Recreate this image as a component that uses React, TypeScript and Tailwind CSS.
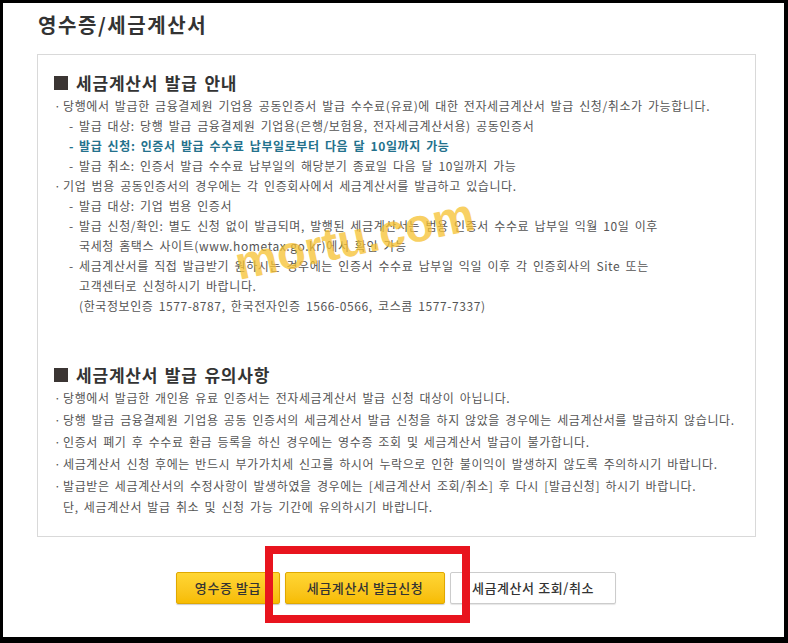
import React from "react";

const font = { fontFamily: '"Noto Sans CJK KR", "Noto Sans", sans-serif' };

function Bullet({ children }: { children: React.ReactNode }) {
  return (
    <div className="flex h-[20px] items-center pl-[16px]">
      <span className="w-[9px] shrink-0">·</span>
      <span>{children}</span>
    </div>
  );
}

function Dash({ children, cls = "" }: { children: React.ReactNode; cls?: string }) {
  return (
    <div className={"flex h-[20px] items-center pl-[31px] " + cls}>
      <span className="w-[10px] shrink-0">-</span>
      <span>{children}</span>
    </div>
  );
}

function Cont({ children, pl = "pl-[41px]" }: { children: React.ReactNode; pl?: string }) {
  return <div className={"flex h-[20px] items-center " + pl}>{children}</div>;
}

export default function App() {
  return (
    <div className="w-[788px] h-[643px] bg-black pl-[3px] pt-[3px] pr-[4px] pb-[6px]" style={font}>
      <div className="relative h-full w-full bg-white overflow-hidden">
        <div className="pl-[35px] pt-[9px] text-[20px] font-bold text-[#333] leading-[26px] tracking-[1.6px]">
          영수증/세금계산서
        </div>
        <div className="ml-[34px] mr-[28px] mt-[16px] h-[483px] border border-[#d9d9d9] text-[12px] text-[#555] tracking-[0.6px] [word-spacing:2px]">
          <div className="pl-[16px] pt-[23px] flex items-center h-[32px] text-[17px] font-bold text-[#333] tracking-[0.8px]">
            <span className="w-[14px] h-[14px] bg-[#3b3533] mr-[8px]"></span>
            세금계산서 발급 안내
          </div>
          <div className="mt-[9px] leading-[20px]">
            <Bullet>당행에서 발급한 금융결제원 기업용 공동인증서 발급 수수료(유료)에 대한 전자세금계산서 발급 신청/취소가 가능합니다.</Bullet>
            <Dash>발급 대상: 당행 발급 금융결제원 기업용(은행/보험용, 전자세금계산서용) 공동인증서</Dash>
            <Dash cls="font-bold text-[#23718c]">발급 신청: 인증서 발급 수수료 납부일로부터 다음 달 10일까지 가능</Dash>
            <Dash>발급 취소: 인증서 발급 수수료 납부일의 해당분기 종료일 다음 달 10일까지 가능</Dash>
            <Bullet>기업 범용 공동인증서의 경우에는 각 인증회사에서 세금계산서를 발급하고 있습니다.</Bullet>
            <Dash>발급 대상: 기업 범용 인증서</Dash>
            <Dash>발급 신청/확인: 별도 신청 없이 발급되며, 발행된 세금계산서는 범용 인증서 수수료 납부일 익월 10일 이후</Dash>
            <Cont>국세청 홈택스 사이트(www.hometax.go.kr)에서 확인 가능</Cont>
            <Dash>세금계산서를 직접 발급받기 원하시는 경우에는 인증서 수수료 납부일 익일 이후 각 인증회사의 Site 또는</Dash>
            <Cont>고객센터로 신청하시기 바랍니다.</Cont>
            <Cont>(한국정보인증 1577-8787, 한국전자인증 1566-0566, 코스콤 1577-7337)</Cont>
          </div>
          <div className="mt-[47px] pl-[16px] flex items-center h-[24px] text-[17px] font-bold text-[#333] tracking-[0.8px]">
            <span className="w-[14px] h-[14px] bg-[#3b3533] mr-[8px]"></span>
            세금계산서 발급 유의사항
          </div>
          <div className="flex flex-col">
            <div className="h-[22px] flex items-center"><Bullet>당행에서 발급한 개인용 유료 인증서는 전자세금계산서 발급 신청 대상이 아닙니다.</Bullet></div>
            <div className="h-[22px] flex items-center"><Bullet>당행 발급 금융결제원 기업용 공동 인증서의 세금계산서 발급 신청을 하지 않았을 경우에는 세금계산서를 발급하지 않습니다.</Bullet></div>
            <div className="h-[22px] flex items-center"><Bullet>인증서 폐기 후 수수료 환급 등록을 하신 경우에는 영수증 조회 및 세금계산서 발급이 불가합니다.</Bullet></div>
            <div className="h-[22px] flex items-center"><Bullet>세금계산서 신청 후에는 반드시 부가가치세 신고를 하시어 누락으로 인한 불이익이 발생하지 않도록 주의하시기 바랍니다.</Bullet></div>
            <div className="h-[22px] flex items-center"><Bullet>발급받은 세금계산서의 수정사항이 발생하였을 경우에는 [세금계산서 조회/취소] 후 다시 [발급신청] 하시기 바랍니다.</Bullet></div>
            <Cont pl="pl-[25px]">단, 세금계산서 발급 취소 및 신청 가능 기간에 유의하시기 바랍니다.</Cont>
          </div>
        </div>
        <div className="mt-[35px] flex gap-[5px] pl-[173px] text-[13px] font-medium text-[#333] tracking-[0.6px]">
          <button className="h-[32px] w-[104px] rounded-[2px] border border-[#e0a800] bg-gradient-to-b from-[#ffd633] to-[#f7bc00] shadow-[0_1px_1px_rgba(0,0,0,0.2)]">영수증 발급</button>
          <button className="h-[32px] w-[160px] rounded-[2px] border border-[#e0a800] bg-gradient-to-b from-[#ffd633] to-[#f7bc00] shadow-[0_1px_1px_rgba(0,0,0,0.2)]">세금계산서 발급신청</button>
          <button className="h-[32px] w-[166px] rounded-[2px] border border-[#ccc] bg-white shadow-[0_1px_1px_rgba(0,0,0,0.1)]">세금계산서 조회/취소</button>
        </div>
        <div className="absolute left-[262px] top-[543px] w-[205px] h-[77px] border-[8px] border-[#e8141e]"></div>
        <div className="absolute left-[230px] top-[212px] rotate-[-12deg] text-[47px] font-bold text-[#f6c130] opacity-75 pointer-events-none leading-none" style={{ fontFamily: '"Liberation Sans", Arial, sans-serif' }}>
          mortu.com
        </div>
      </div>
    </div>
  );
}
